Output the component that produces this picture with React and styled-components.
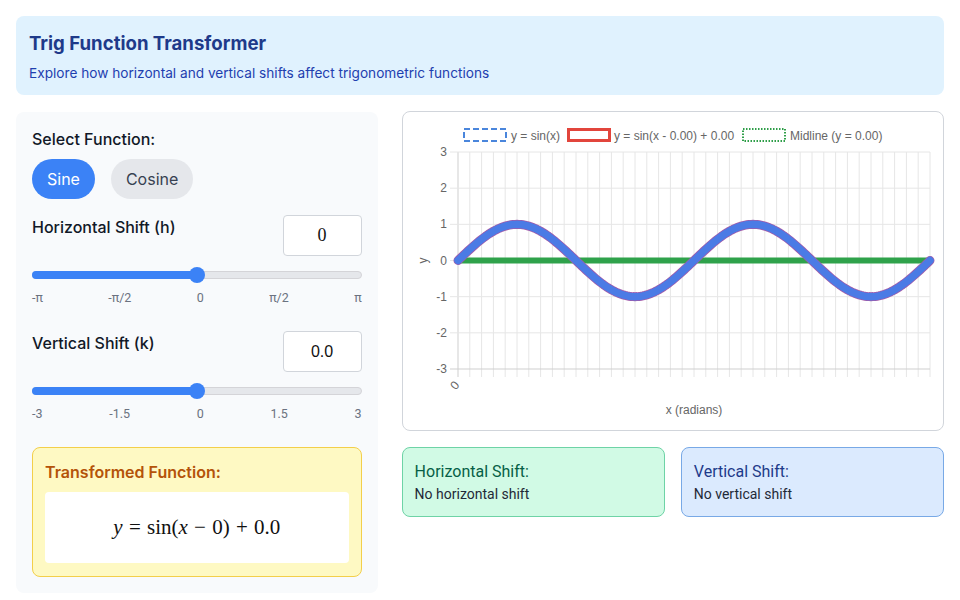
import styled, { createGlobalStyle } from "styled-components";

const GlobalStyle = createGlobalStyle`
  * { box-sizing: border-box; }
  body {
    margin: 0;
    background: #ffffff;
    font-family: Inter, "Noto Sans", sans-serif;
    color: #111827;
  }
`;

const PLOT = { left: 55, right: 527, top: 40, bottom: 257 };
const unit = (PLOT.bottom - PLOT.top) / 6;
const zeroY = PLOT.top + unit * 3;

function sinePath() {
  const pts = [];
  const n = 240;
  for (let i = 0; i <= n; i++) {
    const t = (i / n) * 4 * Math.PI;
    const x = PLOT.left + (i / n) * (PLOT.right - PLOT.left);
    const y = zeroY - unit * Math.sin(t);
    pts.push(`${i === 0 ? "M" : "L"}${x.toFixed(2)} ${y.toFixed(2)}`);
  }
  return pts.join(" ");
}

function Chart() {
  const vlines = [];
  for (let i = 0; i <= 40; i++) {
    const x = PLOT.left + (i * (PLOT.right - PLOT.left)) / 40;
    vlines.push(
      <line
        key={"v" + i}
        x1={x}
        x2={x}
        y1={PLOT.top}
        y2={PLOT.bottom + 8}
        stroke={i === 0 ? "#cfcfcf" : "#e6e6e6"}
        strokeWidth="1"
      />
    );
  }
  const ticks = [3, 2, 1, 0, -1, -2, -3];
  const path = sinePath();
  return (
    <svg width="540" height="317" viewBox="0 0 540 317">
      <g fontFamily="'Liberation Sans', Arial, sans-serif" fontSize="12" fill="#666">
        <rect x="61" y="17" width="42" height="12" fill="#fff" stroke="#4a86dc" strokeWidth="2" strokeDasharray="6 3" />
        <text x="108" y="27.5">y = sin(x)</text>
        <rect x="165.5" y="17.5" width="41" height="11" fill="#fff" stroke="#e2453c" strokeWidth="3" />
        <text x="211" y="27.5">y = sin(x - 0.00) + 0.00</text>
        <rect x="340" y="17" width="42" height="12" fill="#fff" stroke="#2e9e48" strokeWidth="2" strokeDasharray="1.5 1.5" />
        <text x="387" y="27.5">Midline (y = 0.00)</text>
      </g>
      {vlines}
      {ticks.map((v, i) => {
        const y = PLOT.top + i * unit;
        return (
          <g key={v}>
            <line
              x1={PLOT.left - 8}
              x2={PLOT.right}
              y1={y}
              y2={y}
              stroke={v === -3 ? "#cfcfcf" : "#e6e6e6"}
              strokeWidth="1"
            />
            <text
              x={PLOT.left - 11}
              y={y + 4}
              textAnchor="end"
              fontFamily="'Liberation Sans', Arial, sans-serif"
              fontSize="12"
              fill="#666"
            >
              {v}
            </text>
          </g>
        );
      })}
      <text
        transform={`translate(${PLOT.left} 276) rotate(-50)`}
        textAnchor="middle"
        fontFamily="'Liberation Sans', Arial, sans-serif"
        fontSize="12"
        fill="#666"
      >
        0
      </text>
      <text
        transform={`translate(24 ${zeroY}) rotate(-90)`}
        textAnchor="middle"
        fontFamily="'Liberation Sans', Arial, sans-serif"
        fontSize="12"
        fill="#666"
      >
        y
      </text>
      <text
        x={(PLOT.left + PLOT.right) / 2}
        y="302"
        textAnchor="middle"
        fontFamily="'Liberation Sans', Arial, sans-serif"
        fontSize="12"
        fill="#666"
      >
        x (radians)
      </text>
      <line x1={PLOT.left} x2={PLOT.right + 1} y1={zeroY} y2={zeroY} stroke="#2fa24b" strokeWidth="6" />
      <path d={path} fill="none" stroke="#a35aa8" strokeWidth="9" strokeLinecap="round" strokeLinejoin="round" />
      <path d={path} fill="none" stroke="#4b7be5" strokeWidth="7.5" strokeLinecap="round" strokeLinejoin="round" />
    </svg>
  );
}

function Slider({ value, labels }) {
  return (
    <SliderWrap>
      <Track>
        <Fill style={{ width: `${value}%` }} />
        <Thumb style={{ left: `${value}%` }} />
      </Track>
      <TickRow>
        {labels.map((l) => (
          <span key={l}>{l}</span>
        ))}
      </TickRow>
    </SliderWrap>
  );
}

export default function App() {
  return (
    <Page>
      <GlobalStyle />
      <Header>
        <Title>Trig Function Transformer</Title>
        <Subtitle>Explore how horizontal and vertical shifts affect trigonometric functions</Subtitle>
      </Header>
      <Main>
        <Controls>
          <Label>Select Function:</Label>
          <ButtonRow>
            <ToggleButton $active>Sine</ToggleButton>
            <ToggleButton>Cosine</ToggleButton>
          </ButtonRow>

          <Control>
            <ControlHead>
              <Label $head>Horizontal Shift (h)</Label>
              <NumberBox $serif>0</NumberBox>
            </ControlHead>
            <Slider value={50} labels={["-π", "-π/2", "0", "π/2", "π"]} />
          </Control>

          <Control>
            <ControlHead>
              <Label $head>Vertical Shift (k)</Label>
              <NumberBox>0.0</NumberBox>
            </ControlHead>
            <Slider value={50} labels={["-3", "-1.5", "0", "1.5", "3"]} />
          </Control>

          <FormulaBox>
            <FormulaTitle>Transformed Function:</FormulaTitle>
            <FormulaInner>
              <Formula>
                <i>y</i> = sin(<i>x</i> − 0) + 0.0
              </Formula>
            </FormulaInner>
          </FormulaBox>
        </Controls>

        <RightColumn>
          <ChartPanel>
            <Chart />
          </ChartPanel>
          <Cards>
            <InfoCard $tone="green">
              <CardTitle $tone="green">Horizontal Shift:</CardTitle>
              <CardText>No horizontal shift</CardText>
            </InfoCard>
            <InfoCard $tone="blue">
              <CardTitle $tone="blue">Vertical Shift:</CardTitle>
              <CardText>No vertical shift</CardText>
            </InfoCard>
          </Cards>
        </RightColumn>
      </Main>
    </Page>
  );
}

const Page = styled.div`
  padding: 16px;
  width: 960px;
`;
const Header = styled.div`
  background: #e0f2fe;
  border-radius: 8px;
  padding: 13px 13px 12px;
  margin-bottom: 16px;
`;
const Title = styled.h1`
  margin: 0;
  font-size: 18.6px;
  line-height: 28px;
  font-weight: 700;
  color: #1e3a8a;
`;
const Subtitle = styled.p`
  margin: 6px 0 0;
  font-size: 13.65px;
  line-height: 20px;
  color: #1e40af;
`;
const Main = styled.div`
  display: grid;
  grid-template-columns: 2fr 3fr;
  gap: 24px;
  align-items: start;
`;
const Controls = styled.div`
  background: #f8fafc;
  border-radius: 8px;
  padding: 16px;
  margin-top: 1px;
`;
const Label = styled.div`
  font-size: 16px;
  line-height: ${(p) => (p.$head ? "24px" : "22px")};
  font-weight: 500;
  color: #111827;
`;
const ButtonRow = styled.div`
  display: flex;
  gap: 16px;
  margin-top: 9px;
  margin-bottom: 16px;
`;
const ToggleButton = styled.button`
  border: none;
  border-radius: 9999px;
  height: 40px;
  padding: 0 15px;
  font-family: Inter, sans-serif;
  font-size: 16px;
  line-height: 24px;
  background: ${(p) => (p.$active ? "#3b82f6" : "#e5e7eb")};
  color: ${(p) => (p.$active ? "#ffffff" : "#374151")};
`;
const Control = styled.div`
  margin-bottom: 25px;
`;
const ControlHead = styled.div`
  display: flex;
  justify-content: space-between;
  align-items: flex-start;
`;
const NumberBox = styled.div`
  width: 79px;
  height: 41px;
  background: #fff;
  border: 1px solid #d1d5db;
  border-radius: 4px;
  display: flex;
  align-items: center;
  justify-content: center;
  font-family: ${(p) =>
    p.$serif ? '"Liberation Serif", serif' : '"Liberation Sans", Arial, sans-serif'};
  font-size: ${(p) => (p.$serif ? "18px" : "16px")};
  color: #111;
`;
const SliderWrap = styled.div`
  margin-top: 15px;
`;
const Track = styled.div`
  position: relative;
  height: 8px;
  border-radius: 4px;
  background: #e5e7eb;
  border: 1px solid #d4d4d8;
`;
const Fill = styled.div`
  height: 8px;
  margin: -1px;
  border-radius: 4px 0 0 4px;
  background: #3b82f6;
`;
const Thumb = styled.div`
  position: absolute;
  top: 50%;
  width: 16px;
  height: 16px;
  border-radius: 50%;
  background: #3b82f6;
  transform: translate(-50%, -50%);
`;
const TickRow = styled.div`
  display: flex;
  justify-content: space-between;
  margin-top: 11px;
  font-family: Roboto, sans-serif;
  font-size: 12.5px;
  line-height: 16px;
  color: #6b7280;
`;
const FormulaBox = styled.div`
  background: #fef9c3;
  border: 1px solid #f3cf4a;
  border-radius: 8px;
  padding: 12px 12px 13px;
`;
const FormulaTitle = styled.div`
  font-size: 16px;
  line-height: 24px;
  font-weight: 600;
  color: #b45309;
`;
const FormulaInner = styled.div`
  margin-top: 8px;
  background: #fff;
  border-radius: 4px;
  height: 71px;
  display: flex;
  align-items: center;
  justify-content: center;
`;
const Formula = styled.div`
  font-family: "Liberation Serif", "DejaVu Serif", serif;
  font-size: 21px;
  color: #111;
  word-spacing: 1px;
  i {
    font-style: italic;
  }
`;
const RightColumn = styled.div`
  display: flex;
  flex-direction: column;
  gap: 16px;
`;
const ChartPanel = styled.div`
  background: #fff;
  border: 1px solid #d1d5db;
  border-radius: 8px;
  height: 320px;
  svg {
    display: block;
  }
`;
const Cards = styled.div`
  display: grid;
  grid-template-columns: 1fr 1fr;
  gap: 16px;
`;
const tones = {
  green: { bg: "#d1fae5", border: "#6ed3a6", title: "#065f46" },
  blue: { bg: "#dbeafe", border: "#78a9e6", title: "#1e3a8a" },
};
const InfoCard = styled.div`
  background: ${(p) => tones[p.$tone].bg};
  border: 1px solid ${(p) => tones[p.$tone].border};
  border-radius: 8px;
  padding: 12px;
  height: 70px;
  font-family: Roboto, sans-serif;
`;
const CardTitle = styled.div`
  font-size: 16px;
  line-height: 24px;
  font-weight: 400;
  color: ${(p) => tones[p.$tone].title};
`;
const CardText = styled.div`
  font-size: 14px;
  line-height: 20px;
  color: #1f2937;
`;
